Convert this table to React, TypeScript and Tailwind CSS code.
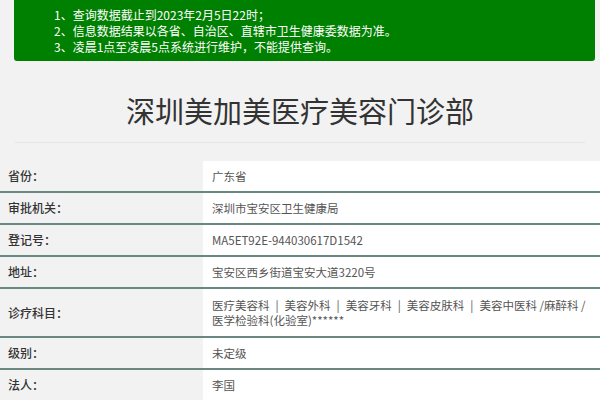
import React from "react";

const Sep = ({ ch = "|" }: { ch?: string }) => <span className="mx-[6px]">{ch}</span>;

const rows: { label: string; value: React.ReactNode; tall?: boolean }[] = [
  { label: "省份：", value: "广东省" },
  { label: "审批机关：", value: "深圳市宝安区卫生健康局" },
  { label: "登记号：", value: "MA5ET92E-944030617D1542" },
  { label: "地址：", value: "宝安区西乡街道宝安大道3220号" },
  {
    label: "诊疗科目：",
    value: (
      <>
        医疗美容科<Sep />美容外科<Sep />美容牙科<Sep />美容皮肤科<Sep />美容中医科 /麻醉科 /
        <br />
        医学检验科(化验室)******
      </>
    ),
    tall: true,
  },
  { label: "级别：", value: "未定级" },
  { label: "法人：", value: "李国" },
];

export default function App() {
  return (
    <div
      className="w-[600px] h-[400px] overflow-hidden bg-[#f2f2f2] text-[#333]"
      style={{ fontFamily: '"Noto Sans CJK SC", "Noto Sans", sans-serif' }}
    >
      {/* notice banner */}
      <div className="ml-[14px] w-[581px] h-[61px] bg-[#008000] rounded-b-[3px] pl-[40px] pt-[7px] text-white text-[12px] leading-[16px]">
        <p>1、查询数据截止到2023年2月5日22时；</p>
        <p>2、信息数据结果以各省、自治区、直辖市卫生健康委数据为准。</p>
        <p>3、凌晨1点至凌晨5点系统进行维护，不能提供查询。</p>
      </div>

      {/* title */}
      <div className="mx-[15px] pt-[33px] pb-[15px] border-b border-[#e6e6e6]">
        <h1 className="text-center text-[29px] leading-[33px] text-[#333]">
          深圳美加美医疗美容门诊部
        </h1>
      </div>

      {/* info table */}
      <div className="mt-[18px]">
        {rows.map((row) => (
          <div
            key={row.label}
            className={`flex border-b-2 border-[#6a8882] ${row.tall ? "h-[49px]" : "h-[32px]"}`}
          >
            <div className="w-[203px] shrink-0 flex items-center pl-[8px] text-[12px] font-medium text-[#333]">
              {row.label}
            </div>
            <div className="flex-1 bg-white flex items-center pl-[9px] text-[11.5px] leading-[15px] text-[#555] whitespace-nowrap">
              <div>{row.value}</div>
            </div>
          </div>
        ))}
      </div>
    </div>
  );
}
